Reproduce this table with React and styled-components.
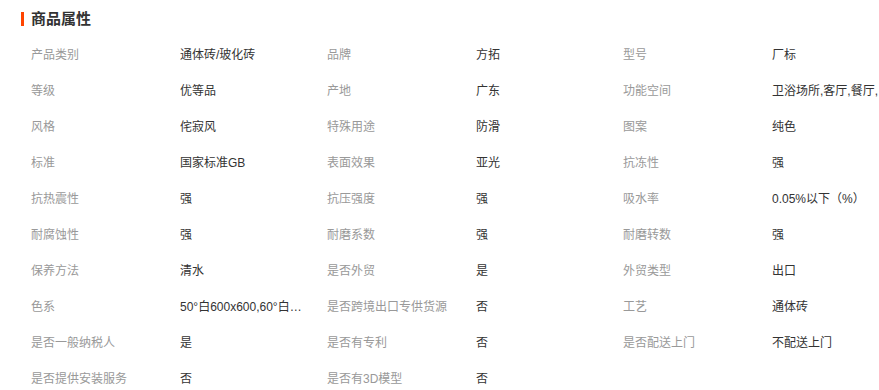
import React from "react";
import styled, { createGlobalStyle } from "styled-components";

const attrs = [
  ["产品类别", "通体砖/玻化砖"],
  ["品牌", "方拓"],
  ["型号", "厂标"],
  ["等级", "优等品"],
  ["产地", "广东"],
  ["功能空间", "卫浴场所,客厅,餐厅,厨房,阳台"],
  ["风格", "侘寂风"],
  ["特殊用途", "防滑"],
  ["图案", "纯色"],
  ["标准", "国家标准GB"],
  ["表面效果", "亚光"],
  ["抗冻性", "强"],
  ["抗热震性", "强"],
  ["抗压强度", "强"],
  ["吸水率", "0.05%以下（%）"],
  ["耐腐蚀性", "强"],
  ["耐磨系数", "强"],
  ["耐磨转数", "强"],
  ["保养方法", "清水"],
  ["是否外贸", "是"],
  ["外贸类型", "出口"],
  ["色系", "50°白600x600,60°白600x1200,70°白"],
  ["是否跨境出口专供货源", "否"],
  ["工艺", "通体砖"],
  ["是否一般纳税人", "是"],
  ["是否有专利", "否"],
  ["是否配送上门", "不配送上门"],
  ["是否提供安装服务", "否"],
  ["是否有3D模型", "否"],
];

const App = () => {
  return (
    <Wrapper>
      <GlobalStyle />
      <Header>
        <Mark />
        <Title>商品属性</Title>
      </Header>
      <Grid>
        {attrs.map(([label, value]) => (
          <Item key={label}>
            <Label>{label}</Label>
            <Value>{value}</Value>
          </Item>
        ))}
      </Grid>
    </Wrapper>
  );
};

const GlobalStyle = createGlobalStyle`
  html, body {
    margin: 0;
    padding: 0;
    background: #fff;
    overflow: hidden;
  }
  body {
    font-family: "Liberation Sans", "Noto Sans CJK SC", sans-serif;
  }
`;

const Wrapper = styled.div`
  width: 100vw;
  height: 390px;
  overflow: hidden;
  padding-left: 21px;
  box-sizing: border-box;
`;

const Header = styled.div`
  display: flex;
  align-items: center;
  gap: 7px;
  padding: 6px 0 3px;
  height: 26px;
`;

const Mark = styled.span`
  width: 3px;
  height: 14px;
  background: #ff4400;
`;

const Title = styled.h2`
  margin: 0;
  font-size: 15px;
  font-weight: bold;
  line-height: 26px;
  color: #333;
`;

const Grid = styled.div`
  display: grid;
  grid-template-columns: repeat(3, 296px);
  width: 888px;
  padding-left: 10px;
`;

const Item = styled.div`
  display: flex;
  align-items: center;
  height: 36px;
  font-size: 12px;
`;

const Label = styled.span`
  width: 149px;
  flex: none;
  color: #999;
  white-space: nowrap;
`;

const Value = styled.span`
  width: 122px;
  flex: none;
  color: #333;
  white-space: nowrap;
  overflow: hidden;
  text-overflow: ellipsis;
`;

export default App;
